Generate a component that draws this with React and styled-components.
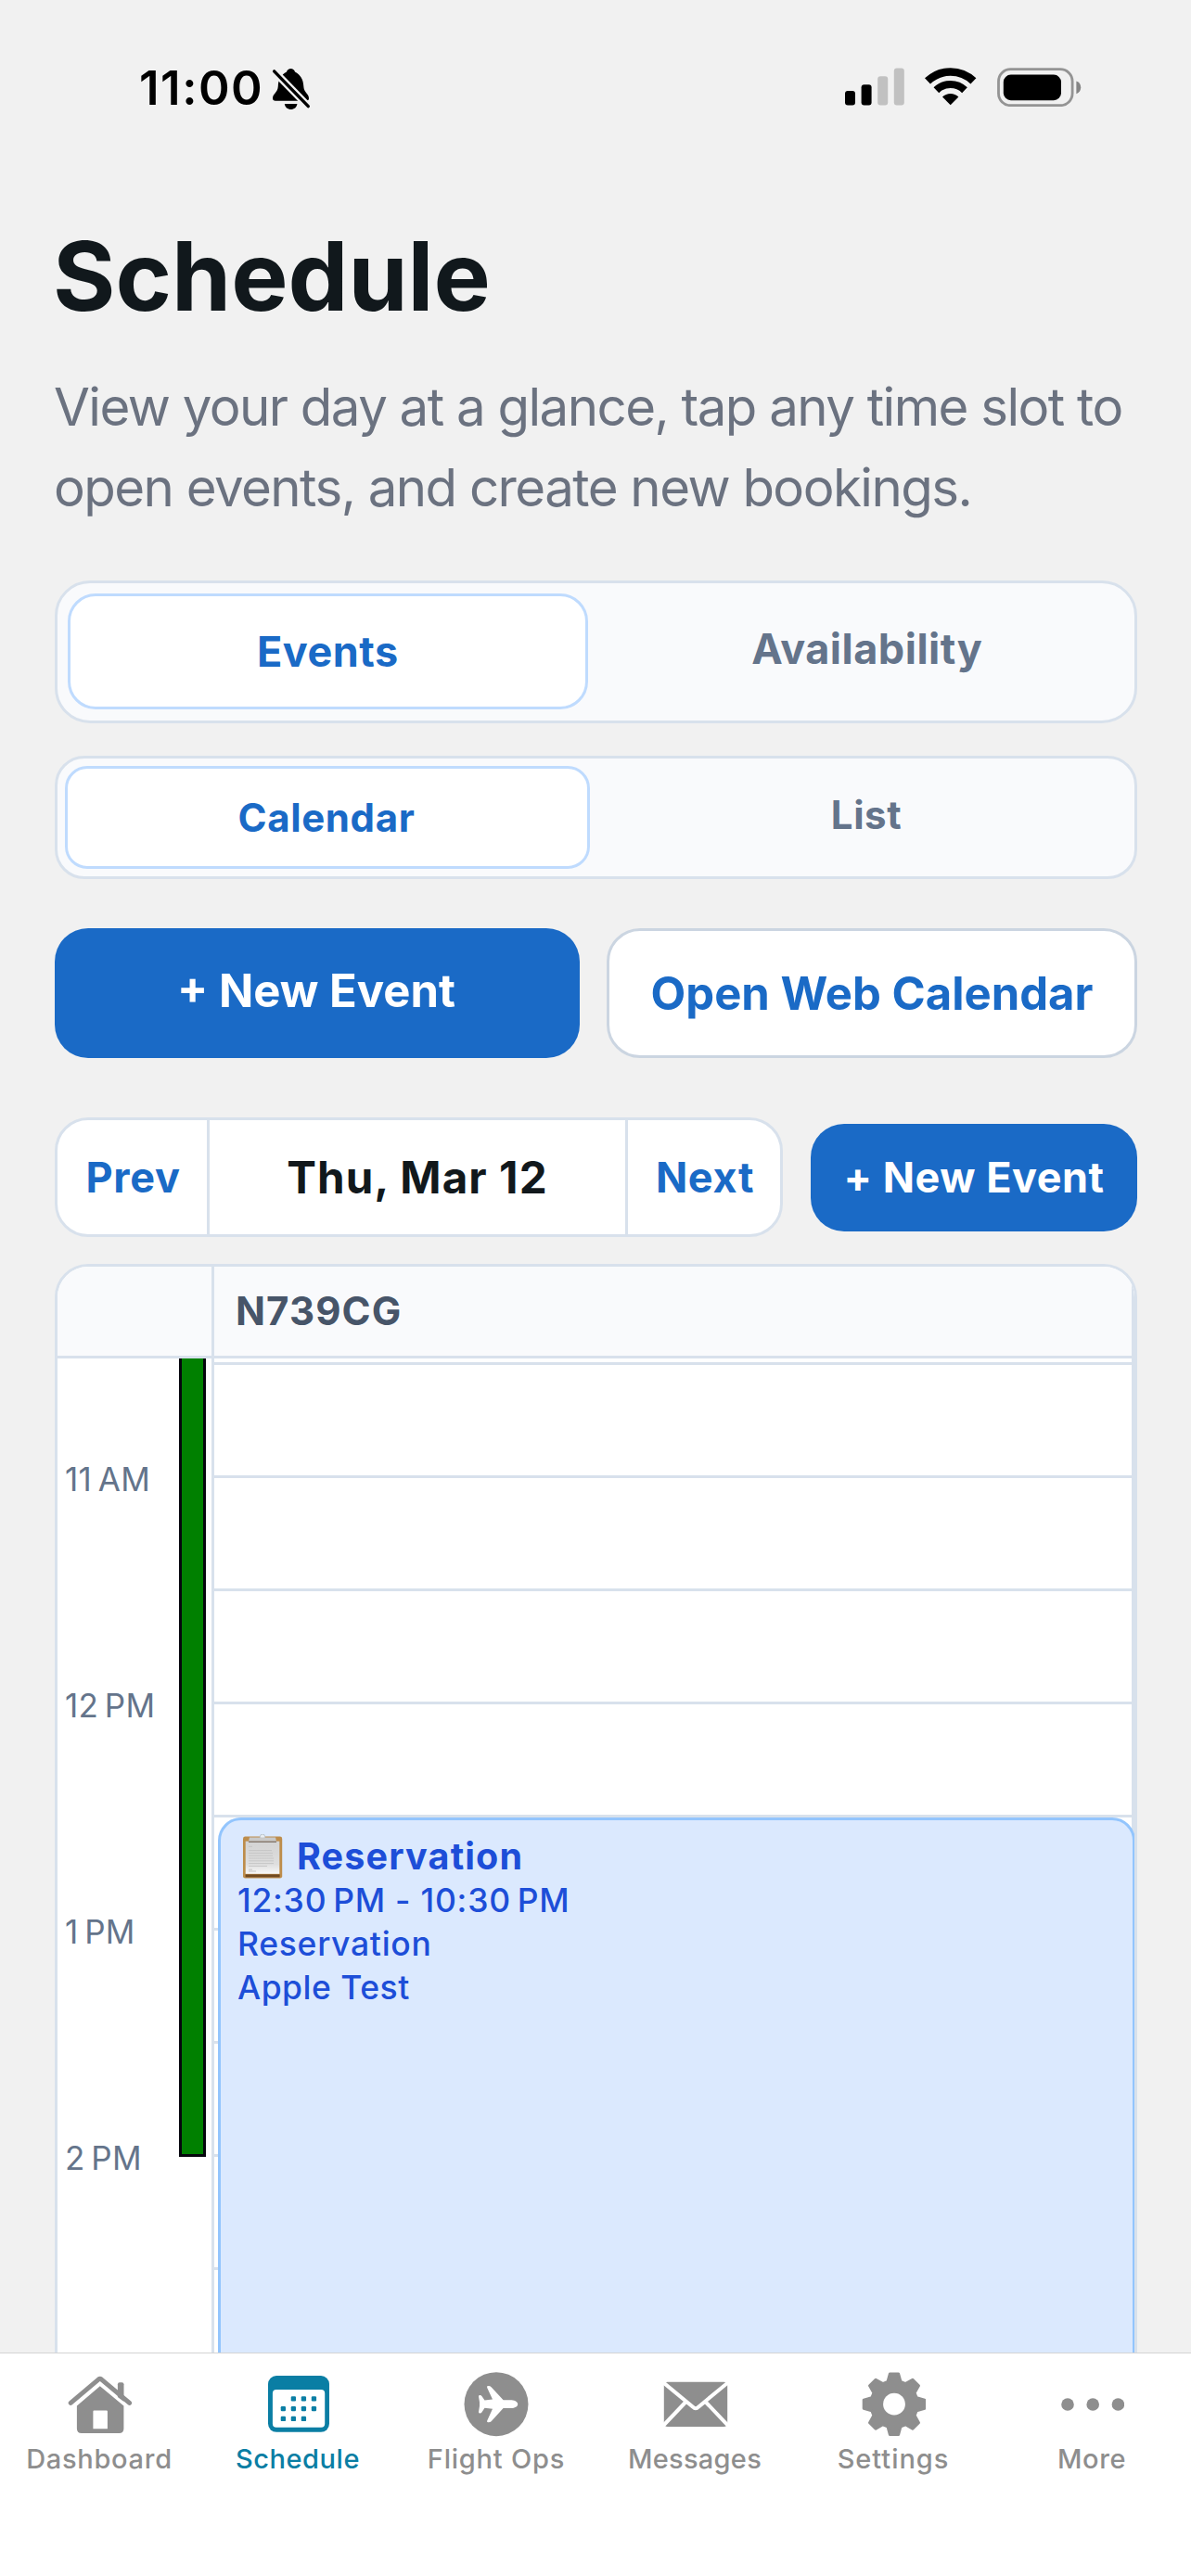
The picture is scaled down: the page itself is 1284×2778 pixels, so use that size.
import React, { useState } from 'react'
import styled, { createGlobalStyle } from 'styled-components'

const HOURS = ['11\u202fAM', '12\u202fPM', '1\u202fPM', '2\u202fPM']
const SLOTS = [0, 1, 2, 3, 4, 5, 6, 7, 8]

const BellOffIcon = () => (
  <svg width="42" height="46" viewBox="0 0 42 46">
    <path d="M20.5 1C22.5 1 24.5 2.5 25 4.5C31 7.5 34 13 34.3 20C34.5 27 40 28 40 33Q40 35.7 37 35.7H4Q1 35.7 1 33C1 28 6.5 27 6.8 20C7 13 10 7.5 16 4.5C16.5 2.5 18.5 1 20.5 1Z" />
    <path d="M13.8 39H27.4C27 42.8 24 45 20.6 45C17.2 45 14.2 42.8 13.8 39Z" />
    <path d="M-1 0.2L43 45.4" stroke="#f1f1f1" strokeWidth="8" />
    <path d="M2.6 3.9L39.3 41.6" stroke="#000" strokeWidth="3.4" strokeLinecap="round" />
  </svg>
)

const SignalIcon = () => (
  <svg width="64" height="41" viewBox="0 0 64 41">
    <rect x="0" y="25" width="11" height="15.4" rx="3" />
    <rect x="17.6" y="18.2" width="11" height="22.2" rx="3" />
    <rect x="35.2" y="9.2" width="11" height="31.2" rx="3" fill="#c1c1c1" />
    <rect x="52.8" y="0.4" width="11" height="40" rx="3" fill="#c1c1c1" />
  </svg>
)

const WifiIcon = () => (
  <svg width="56" height="41" viewBox="0 0 56 41">
    <path d="M3 14.4A35.6 35.6 0 0 1 52.4 14.4" fill="none" stroke="#000" strokeWidth="8.6" />
    <path d="M12.4 24.2A22 22 0 0 1 43 24.2" fill="none" stroke="#000" strokeWidth="8.2" />
    <path d="M27.7 40.3L19 31.5A12.4 12.4 0 0 1 36.4 31.5Z" />
  </svg>
)

const BatteryIcon = () => (
  <svg width="91" height="42" viewBox="0 0 91 42">
    <rect x="1.5" y="1.7" width="79.6" height="39" rx="13" fill="none" stroke="#949494" strokeWidth="2.8" />
    <rect x="6.8" y="7.6" width="62.2" height="27.6" rx="8" />
    <path d="M85.4 14.5C88.6 15.6 90.2 18 90.2 21.3C90.2 24.6 88.6 27 85.4 28.2Z" fill="#858585" />
  </svg>
)

const ClipboardIcon = () => (
  <svg width="43" height="48" viewBox="0 0 43 48">
    <defs>
      <linearGradient id="paper" x1="0" y1="0" x2="0" y2="1">
        <stop offset="0" stopColor="#d3d3d3" />
        <stop offset="0.7" stopColor="#dedede" />
        <stop offset="1" stopColor="#f8f8f8" />
      </linearGradient>
    </defs>
    <rect x="0" y="2.6" width="42.2" height="45" rx="2.4" fill="#bd8d4c" />
    <rect x="2.6" y="43.4" width="37" height="3" fill="#704a22" />
    <rect x="2.7" y="7.6" width="36.6" height="35.2" fill="url(#paper)" />
    <circle cx="21" cy="2.6" r="2.6" fill="#e8edf1" stroke="#b9c3cb" strokeWidth="1" />
    <path d="M7 3.6H35L36 7.8H6Z" fill="#c9c9c9" />
    <rect x="6" y="7.6" width="30" height="1.4" fill="#857a70" />
    <path d="M6 13.4h4M6 17.6h25M6 20.4h26M6 23.2h26M6 26h27M6 28.8h27M6 31.6h27M6 34.4h20M6 38.2h4M6 40h8" stroke="#c6c6c6" strokeWidth="1" />
  </svg>
)

const HomeIcon = () => (
  <svg width="72" height="70" viewBox="-1 0 72 70">
    <path d="M35.8 15.2L61.4 36.4V61Q61.4 66 56.4 66H15.9Q10.9 66 10.9 61V36.4ZM28.4 42.6V61.2H43.9V42.6Q43.9 41.6 42.9 41.6H29.4Q28.4 41.6 28.4 42.6Z" fill="currentColor" fillRule="evenodd" />
    <path d="M54.9 27V13.2Q54.9 11.2 56.9 11.2H59.5Q61.5 11.2 61.5 13.2V32Z" fill="currentColor" />
    <path d="M4.2 33.4L34.4 7.8Q35.8 6.8 37.2 7.8L67.6 33.4" fill="none" stroke="currentColor" strokeWidth="5" strokeLinecap="round" strokeLinejoin="round" />
  </svg>
)

const CAL_DOTS = [[1, 0], [2, 0], [3, 0], [0, 1], [1, 1], [2, 1], [3, 1], [0, 2], [1, 2], [2, 2]]

const CalendarIcon = () => (
  <svg width="72" height="70" viewBox="-1 0 72 70">
    <rect x="3" y="4" width="66" height="60.8" rx="9" fill="currentColor" />
    <rect x="7.9" y="19" width="56.3" height="40.8" rx="4" fill="#fff" />
    {CAL_DOTS.map(([c, r]) =>
      <rect key={`${c}${r}`} x={16.7 + c * 11.03} y={26.2 + r * 10.8} width="5.3" height="5.3" rx="1.2" fill="currentColor" />
    )}
  </svg>
)

const PlaneIcon = () => (
  <svg width="70" height="70" viewBox="0 0 70 70">
    <circle cx="35" cy="34.7" r="34.5" fill="currentColor" />
    <path d="M58.2 34.7C58.2 31.6 54 30.3 50 30.3H42.6L29.6 16.2Q28.2 14.8 26 15.1Q24.6 15.3 25.2 17L31 29.6L22.5 30.6L19.4 26Q18.6 24.8 17 25Q15.9 25.2 16 26.4L17 32.6V36.8L16 43Q15.9 44.2 17 44.4Q18.6 44.6 19.4 43.4L22.5 38.8L31 39.8L25.2 52.4Q24.6 54.1 26 54.3Q28.2 54.6 29.6 53.2L42.6 39.1H50C54 39.1 58.2 37.8 58.2 34.7Z" fill="#fff" />
  </svg>
)

const MailIcon = () => (
  <svg width="72" height="70" viewBox="-1 0 72 70">
    <rect x="1.8" y="10.8" width="68.4" height="48.2" rx="4" fill="currentColor" />
    <path d="M-1 9.6L33 37.6Q36 40.8 39 37.6L73 9.6M25.6 32L-1 60M46.4 32L73 60" fill="none" stroke="#fff" strokeWidth="4" />
  </svg>
)

const GearIcon = () => {
  const points = []
  for (let i = 0; i < 8; i++) {
    const a = i * Math.PI / 4
    const tooth = [[-7, -24.2], [-4.6, -32.8], [4.6, -32.8], [7, -24.2]]
    tooth.forEach(([x, y]) => points.push(
      `${(x * Math.cos(a) - y * Math.sin(a)).toFixed(2)} ${(x * Math.sin(a) + y * Math.cos(a)).toFixed(2)}`
    ))
  }
  return (
    <svg width="70" height="70" viewBox="-36 -34.7 70 70">
      <path d={`M${points.join('L')}Z`} fill="currentColor" stroke="currentColor" strokeWidth="3" strokeLinejoin="round" />
      <circle r="11.9" fill="#fff" />
    </svg>
  )
}

const MoreIcon = () => (
  <svg width="70" height="70" viewBox="-1 0 70 70">
    <circle cx="8" cy="35" r="6.8" fill="currentColor" />
    <circle cx="35.2" cy="35" r="6.8" fill="currentColor" />
    <circle cx="62.4" cy="35" r="6.8" fill="currentColor" />
  </svg>
)

const TABS = [
  { label: 'Dashboard', Icon: HomeIcon, spacing: 0.7 },
  { label: 'Schedule', Icon: CalendarIcon, spacing: 0.55 },
  { label: 'Flight Ops', Icon: PlaneIcon, spacing: 0.8 },
  { label: 'Messages', Icon: MailIcon, spacing: 0.3 },
  { label: 'Settings', Icon: GearIcon, spacing: 0.95 },
  { label: 'More', Icon: MoreIcon, spacing: 0.6 }
]

export default function App() {
  const [section, setSection] = useState('Events')
  const [view, setView] = useState('Calendar')

  return (
    <Screen>
      <GlobalStyle />
      <StatusBar>
        <Clock>11:00</Clock>
        <BellOffIcon />
        <StatusIcons>
          <SignalIcon />
          <WifiIcon />
          <BatteryIcon />
        </StatusIcons>
      </StatusBar>
      <Content>
        <Title>Schedule</Title>
        <Subtitle>View your day at a glance, tap any time slot to open events, and create new bookings.</Subtitle>
        <SectionSwitch>
          {['Events', 'Availability'].map(name =>
            <SectionOption key={name} $active={name === section} onClick={() => setSection(name)}>{name}</SectionOption>
          )}
        </SectionSwitch>
        <ViewSwitch>
          {['Calendar', 'List'].map(name =>
            <ViewOption key={name} $active={name === view} onClick={() => setView(name)}>{name}</ViewOption>
          )}
        </ViewSwitch>
        <Actions>
          <PrimaryButton>+ New Event</PrimaryButton>
          <OutlineButton>Open Web Calendar</OutlineButton>
        </Actions>
        <Toolbar>
          <DateNav>
            <NavButton $width={161}>Prev</NavButton>
            <CurrentDate>Thu, Mar 12</CurrentDate>
            <NavButton $width={164}>Next</NavButton>
          </DateNav>
          <SmallButton>+ New Event</SmallButton>
        </Toolbar>
        <DayTable>
          <TableHeader>
            <GutterHead />
            <ColumnHead>N739CG</ColumnHead>
          </TableHeader>
          <TableBody>
            <Gutter>
              <Labels>
                {HOURS.map(hour => <HourLabel key={hour}>{hour}</HourLabel>)}
              </Labels>
              <Daylight />
            </Gutter>
            <Column>
              {SLOTS.map(slot => <Slot key={slot} />)}
              <EventCard>
                <EventTitle><ClipboardIcon />Reservation</EventTitle>
                <EventLine $spacing={0.75}>{'12:30\u202fPM - 10:30\u202fPM'}</EventLine>
                <EventLine $spacing={0.7}>Reservation</EventLine>
                <EventLine $spacing={0.5}>Apple Test</EventLine>
              </EventCard>
            </Column>
          </TableBody>
        </DayTable>
      </Content>
      <TabBar>
        {TABS.map(({ label, Icon, spacing }) =>
          <Tab key={label} $active={label === 'Schedule'} $spacing={spacing}>
            <Icon />
            <span>{label}</span>
          </Tab>
        )}
      </TabBar>
    </Screen>
  )
}

const GlobalStyle = createGlobalStyle`
  * {
    box-sizing: border-box;
  }

  body {
    margin: 0;
    background: #f1f1f1;
    font-family: Inter, "Liberation Sans", sans-serif;
  }

  button {
    margin: 0;
    padding: 0;
    border: 0;
    background: none;
    font-family: inherit;
    white-space: nowrap;
  }

  svg {
    display: block;
    flex: none;
  }
`

const Screen = styled.div`
  display: flex;
  flex-direction: column;
  width: 1284px;
  height: 2778px;
  overflow: hidden;
  background: #f1f1f1;
`

const StatusBar = styled.div`
  display: flex;
  flex: none;
  align-items: center;
  height: 191px;
  padding: 0 118px 0 150px;
`

const Clock = styled.div`
  width: 143px;
  margin-bottom: 2px;
  color: #000;
  font-size: 51px;
  font-weight: 570;
  letter-spacing: 1.5px;
`

const StatusIcons = styled.div`
  display: flex;
  gap: 22px;
  margin: 0 0 4px auto;
`

const Content = styled.div`
  display: flex;
  flex: 1;
  flex-direction: column;
  min-height: 0;
  padding: 47px 58px 0 59px;
  overflow: hidden;
`

const Title = styled.h1`
  flex: none;
  margin: 0 0 38px -2px;
  color: #11181c;
  font-size: 103px;
  font-weight: 700;
  line-height: 120px;
`

const Subtitle = styled.p`
  flex: none;
  margin: 0 -10px 57px -1px;
  color: #6b7280;
  font-size: 56.4px;
  letter-spacing: -1.54px;
  line-height: 86.5px;
`

const Switch = styled.div`
  display: flex;
  flex: none;
  align-items: flex-start;
  border: 3px solid #d8e1ec;
  background: #f9fafc;
`

const SectionSwitch = styled(Switch)`
  gap: 24px;
  height: 154px;
  padding: 11px;
  border-radius: 38px;
`

const ViewSwitch = styled(Switch)`
  gap: 19px;
  height: 133px;
  margin-top: 35px;
  padding: 8px;
  border-radius: 32px;
`

const Option = styled.button`
  flex: 1 1 ${props => props.$active ? '6px' : '0'};
  border: ${props => props.$active ? '3px solid #bfdbfe' : '0'};
  background: ${props => props.$active ? '#fff' : 'none'};
  color: ${props => props.$active ? '#1a6ac6' : '#64748b'};
  font-weight: 680;
`

const SectionOption = styled(Option)`
  height: ${props => props.$active ? 125 : 119}px;
  border-radius: 30px;
  font-size: 45px;
  letter-spacing: 0.5px;
`

const ViewOption = styled(Option)`
  height: ${props => props.$active ? 111 : 105}px;
  padding-right: 2px;
  border-radius: 24px;
  font-size: 42px;
  letter-spacing: 0.6px;
`

const Actions = styled.div`
  display: flex;
  flex: none;
  gap: 29px;
  height: 140px;
  margin-top: 53px;
`

const PrimaryButton = styled.button`
  width: 566px;
  padding: 0 2px 6px 0;
  border-radius: 36px;
  background: #1a6ac6;
  color: #fff;
  font-size: 49px;
  font-weight: 680;
`

const OutlineButton = styled.button`
  flex: 1;
  border: 3px solid #cbd5e1;
  border-radius: 36px;
  background: #fff;
  color: #1a6ac6;
  font-size: 49px;
  font-weight: 680;
`

const Toolbar = styled.div`
  display: flex;
  flex: none;
  align-items: center;
  justify-content: space-between;
  margin-top: 64px;
`

const DateNav = styled.div`
  display: flex;
  width: 785px;
  height: 129px;
  border: 3px solid #d8e1ec;
  border-radius: 36px;
  background: #fff;
`

const NavButton = styled.button`
  width: ${props => props.$width}px;
  padding-left: 2px;
  color: #1a6ac6;
  font-size: 45px;
  font-weight: 680;
  letter-spacing: 0.7px;
`

const CurrentDate = styled.div`
  display: flex;
  flex: 1;
  align-items: center;
  justify-content: center;
  border: solid #d8e1ec;
  border-width: 0 3px;
  color: #11181c;
  font-size: 47.5px;
  font-weight: 660;
  letter-spacing: 1.1px;
`

const SmallButton = styled.button`
  width: 352px;
  height: 116px;
  border-radius: 36px;
  background: #1a6ac6;
  color: #fff;
  font-size: 45px;
  font-weight: 680;
  letter-spacing: 0.5px;
`

const DayTable = styled.div`
  flex: none;
  height: 1300px;
  margin-top: 29px;
  border: 3px solid #d8e1ec;
  border-radius: 36px;
  background: #fff;
  overflow: hidden;
`

const TableHeader = styled.div`
  display: flex;
  height: 99px;
  border-bottom: 3px solid #d8e1ec;
  background: #f9fafc;
`

const GutterHead = styled.div`
  width: 169px;
  border-right: 3px solid #d8e1ec;
`

const ColumnHead = styled.div`
  display: flex;
  flex: 1;
  align-items: center;
  padding: 0 0 1px 23px;
  border-right: 3px solid #d8e1ec;
  color: #475569;
  font-size: 42px;
  font-weight: 660;
  letter-spacing: 1.1px;
`

const TableBody = styled.div`
  display: flex;
  height: 1200px;
`

const Gutter = styled.div`
  display: flex;
  width: 169px;
  padding-right: 6px;
  border-right: 3px solid #d8e1ec;
`

const Labels = styled.div`
  flex: 1;
  padding: 108px 0 0 8px;
`

const HourLabel = styled.div`
  height: 244px;
  color: #64748b;
  font-size: 35px;
  letter-spacing: 0.3px;
  line-height: 44px;
  white-space: nowrap;
`

const Daylight = styled.div`
  width: 29px;
  height: 861px;
  border: solid #06060e;
  border-width: 0 3px 3px;
  background: #008000;
`

const Column = styled.div`
  position: relative;
  flex: 1;
  border-right: 3px solid #d8e1ec;
`

const Slot = styled.div`
  height: 122px;
  border-bottom: 3px solid #d8e1ec;

  &:first-child {
    height: 7px;
  }
`

const EventCard = styled.div`
  position: absolute;
  top: 495px;
  right: -4px;
  bottom: -40px;
  left: 4px;
  padding: 13px 18px;
  border: 3px solid #93c5fd;
  border-radius: 25px;
  background: #dbe9fe;
  color: #1d4ed8;
`

const EventTitle = styled.div`
  display: flex;
  align-items: center;
  gap: 15px;
  height: 51px;
  padding-left: 6px;
  font-size: 39.5px;
  font-weight: 740;
  letter-spacing: 1.15px;
`

const EventLine = styled.div`
  font-size: 35.5px;
  font-weight: 550;
  letter-spacing: ${props => props.$spacing}px;
  line-height: 46.8px;
`

const TabBar = styled.nav`
  display: grid;
  flex: none;
  grid-template-columns: repeat(6, 1fr);
  height: 241px;
  padding-top: 20px;
  border-top: 1px solid #d4d4d4;
  background: #fff;
`

const Tab = styled.div`
  display: flex;
  flex-direction: column;
  align-items: center;
  gap: 5px;
  color: ${props => props.$active ? '#0a7ea4' : '#8e8e8e'};
  font-size: 29px;
  font-weight: 480;
  letter-spacing: ${props => props.$spacing}px;
  line-height: 37px;
`
